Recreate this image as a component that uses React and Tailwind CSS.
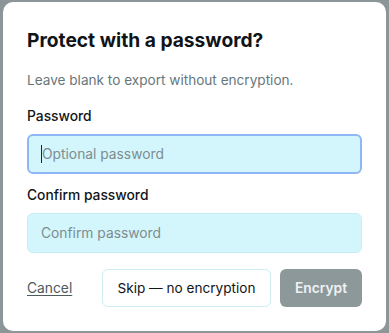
import React from "react";

const App = () => {
  return (
    <div className="h-[333px] w-[389px] bg-[#8c9699] pt-[2px] pl-[3px] font-['Inter',sans-serif]">
      <div className="flex h-[329px] w-[383px] flex-col rounded-[10px] bg-white px-6 pt-6">
        <h1 className="text-[19.2px] font-bold leading-7 text-[#111418]">
          Protect with a password?
        </h1>
        <p className="mt-4 text-[13.6px] leading-5 text-[#66777c]">
          Leave blank to export without encryption.
        </p>

        <label className="mt-4 text-[13.8px] font-medium leading-5 text-[#111418]">
          Password
        </label>
        <div className="relative mt-2">
          <input
            type="password"
            placeholder="Optional password"
            className="h-10 w-full rounded-md border-2 border-[#8fb6f5] bg-[#d3f6fc] px-[13px] text-[13.8px] text-[#111418] outline-none placeholder:text-[#7d8c90]"
          />
          <span className="absolute left-[14px] top-[11px] h-[18px] w-px bg-[#222]" />
        </div>

        <label className="mt-[11px] text-[13.8px] font-medium leading-5 text-[#111418]">
          Confirm password
        </label>
        <input
          type="password"
          placeholder="Confirm password"
          className="mt-2 h-10 w-full rounded-md border border-[#c7eef4] bg-[#d3f6fc] px-[13px] text-[13.8px] text-[#111418] outline-none placeholder:text-[#7d8c90]"
        />

        <div className="mt-4 flex items-center justify-between">
          <button className="text-[13.8px] text-[#4d5a5e] underline underline-offset-2">
            Cancel
          </button>
          <div className="flex gap-[9px]">
            <button className="h-[38px] w-[169px] rounded-md border border-[#cdeef3] bg-white text-[13.6px] text-[#111418]">
              Skip — no encryption
            </button>
            <button className="h-[38px] w-[82px] rounded-md bg-[#8d989b] text-[13.8px] font-semibold text-[#eef2f3]">
              Encrypt
            </button>
          </div>
        </div>
      </div>
    </div>
  );
};

export default App;
